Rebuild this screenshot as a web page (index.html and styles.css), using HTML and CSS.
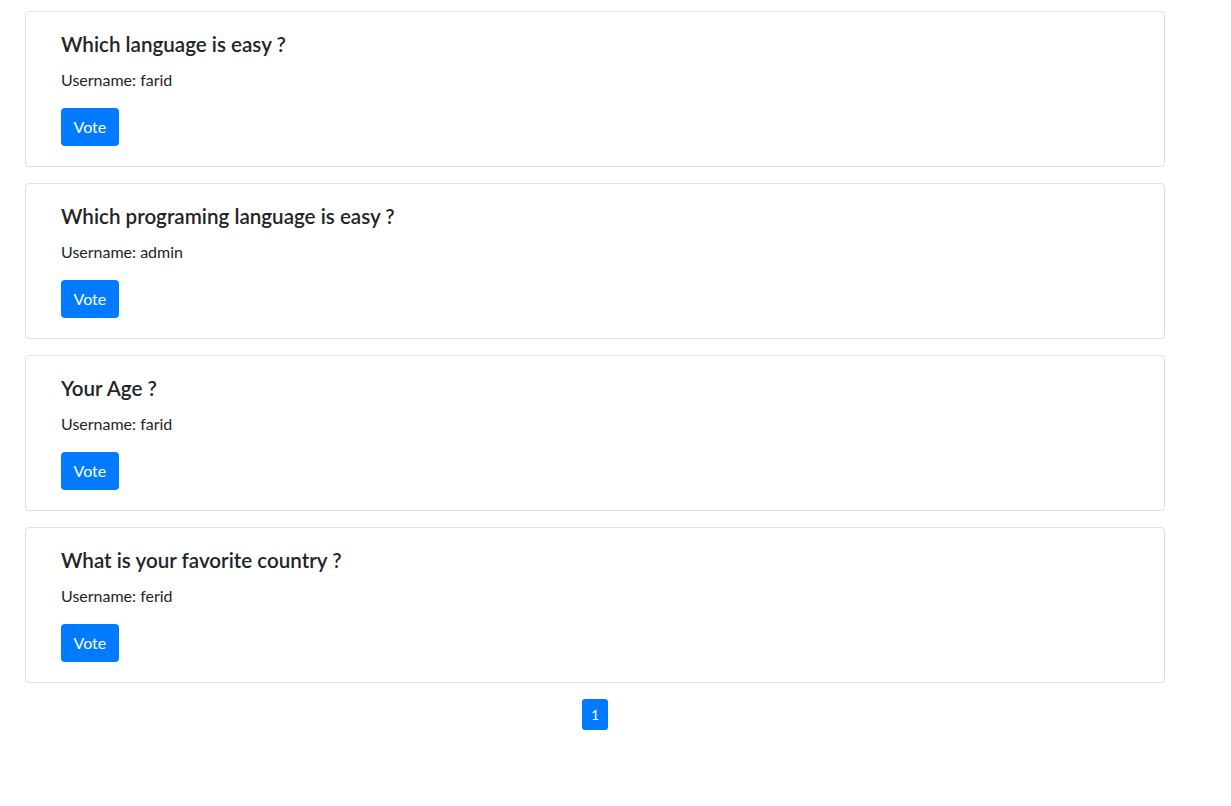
FILE: index.html
```html
<!DOCTYPE html>
<html lang="en">
<head>
  <meta charset="UTF-8" />
  <meta name="viewport" content="width=device-width, initial-scale=1" />
  <title>Polls</title>
  <link rel="stylesheet" href="styles.css">
</head>
<body>
  <div class="container">
    <div class="poll-card">
      <h5 class="poll-title">Which language is easy ?</h5>
      <p class="poll-user">Username: farid</p>
      <a href="#" class="btn-vote">Vote</a>
    </div>
    <div class="poll-card">
      <h5 class="poll-title">Which programing language is easy ?</h5>
      <p class="poll-user">Username: admin</p>
      <a href="#" class="btn-vote">Vote</a>
    </div>
    <div class="poll-card">
      <h5 class="poll-title">Your Age ?</h5>
      <p class="poll-user">Username: farid</p>
      <a href="#" class="btn-vote">Vote</a>
    </div>
    <div class="poll-card">
      <h5 class="poll-title">What is your favorite country ?</h5>
      <p class="poll-user">Username: ferid</p>
      <a href="#" class="btn-vote">Vote</a>
    </div>

    <ul class="pagination">
      <li><a href="#" class="page-link active">1</a></li>
    </ul>
  </div>
</body>
</html>
```

FILE: styles.css
```css
/* Global Styles */
body {
  font-family: Lato, "Open Sans", Arial, sans-serif;
  font-size: 16px;
  line-height: 1.5;
  color: #212529;
  background-color: #fff;
  margin: 0;
}

.container {
  width: 1140px;
  margin-left: 25px;
  padding-top: 11px;
}

/* Poll cards */
.poll-card {
  border: 1px solid rgba(0, 0, 0, 0.125);
  border-radius: 4px;
  padding: 20px 35px 20px;
  margin-bottom: 16px;
}
.poll-title {
  font-size: 20.6px;
  font-weight: 600;
  line-height: 24px;
  margin: 0 0 12px;
}
.poll-user {
  margin: 0 0 16px;
}
.btn-vote {
  display: inline-block;
  background-color: #007bff;
  color: #fff;
  text-decoration: none;
  padding: 7px 12.5px;
  border-radius: 4px;
  line-height: 24px;
}

/* Pagination */
.pagination {
  list-style: none;
  display: flex;
  justify-content: center;
  margin: 0;
  padding: 0;
}
.page-link {
  display: block;
  font-size: 14px;
  line-height: 21px;
  padding: 5px 8.5px;
  border-radius: 3px;
  text-decoration: none;
}
.page-link.active {
  background-color: #007bff;
  color: #fff;
}
```
